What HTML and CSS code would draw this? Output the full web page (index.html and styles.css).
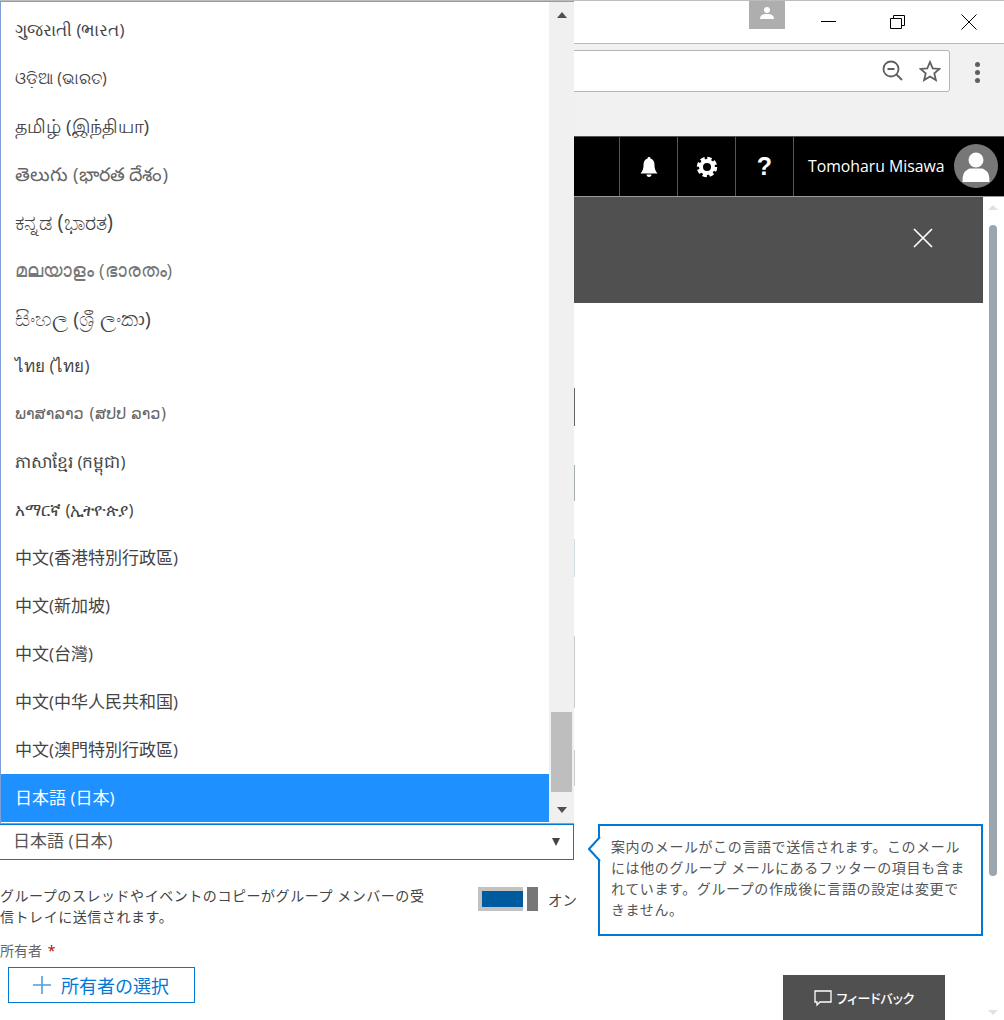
FILE: index.html
```html
<!DOCTYPE html>
<html lang="ja">
<head>
<meta charset="utf-8">
<title>グループの作成</title>
<link rel="stylesheet" href="styles.css">
</head>
<body>
<div class="page">
  <div class="titlebar">
    <div class="profile"><svg width="16" height="14" viewBox="0 0 16 14"><circle cx="8" cy="4" r="3" fill="#fff"/><path d="M1 13c0-4 3-5 7-5s7 1 7 5z" fill="#fff"/></svg></div>
    <div class="winbtns">
      <svg class="winmin" width="16" height="16" viewBox="0 0 16 16"><path d="M0 7.500h15" stroke="#000" fill="none"/></svg>
      <svg width="16" height="16" viewBox="0 0 16 16"><path d="M.5 4.500h11v10H.5zM3.500 4V1.500h11V11.500H12" stroke="#000" fill="none"/></svg>
      <svg width="16" height="16" viewBox="0 0 16 16"><path d="M.5.500l15 15M15.500.500l-15 15" stroke="#000" fill="none"/></svg>
    </div>
  </div>
  <div class="toolbar">
    <div class="omnibox">
      <svg width="22" height="22" viewBox="0 0 22 22"><circle cx="9" cy="9" r="7.500" fill="none" stroke="#5f5f5f" stroke-width="1.800"/><path d="M5.500 9h7M14.500 14.500l5.500 5.500" stroke="#5f5f5f" stroke-width="1.800" fill="none"/></svg>
      <svg width="22" height="22" viewBox="0 0 22 22"><path d="M11 2l2.700 6.300 6.800.6-5.200 4.500 1.600 6.700-5.900-3.600-5.900 3.600 1.600-6.700L1.500 8.900l6.800-.6z" fill="none" stroke="#5f5f5f" stroke-width="1.800"/></svg>
    </div>
    <div class="dots"><i></i><i></i><i></i></div>
  </div>
  <header class="appbar">
    <div class="appbtn"><svg width="18" height="20" viewBox="0 0 18 20"><path d="M9 0c1 0 1.500.7 1.500 1.500C13.500 2.300 14.500 5 14.500 8c0 4 1 6 3 8.500H.5c2-2.500 3-4.500 3-8.500 0-3 1-5.700 4-6.500C7.500.7 8 0 9 0zM6.500 17.500h5c0 1.500-1 2.500-2.500 2.500s-2.500-1-2.500-2.500z" fill="#fff"/></svg></div>
    <div class="appbtn"><svg width="22" height="22" viewBox="0 0 22 22"><circle cx="11" cy="11" r="6" fill="none" stroke="#fff" stroke-width="4"/><circle cx="11" cy="11" r="8.500" fill="none" stroke="#fff" stroke-width="3.500" stroke-dasharray="4.200 2.480"/></svg></div>
    <div class="appbtn help">?</div>
    <div class="user">
      <span class="username">Tomoharu Misawa</span>
      <div class="avatar"><svg width="44" height="44" viewBox="0 0 44 44"><circle cx="22" cy="16" r="7.500" fill="#fff"/><path d="M8.500 38c0-9 2-11 7-13.500h13c5 2.500 7 4.500 7 13.500z" fill="#fff"/></svg></div>
    </div>
  </header>
  <div class="content">
    <main class="panel">
      <div class="banner"><svg width="20" height="20" viewBox="0 0 20 20"><path d="M1 1l18 18M19 1L1 19" stroke="#fff" stroke-width="1.700" fill="none"/></svg></div>
      <div class="form">
        <div class="left">
          <div class="field f1"></div>
          <div class="field f2"></div>
          <div class="field f3"></div>
          <div class="field f4"></div>
          <div class="field f5"></div>
          <div class="select"><span>日本語 (日本)</span><i class="caret"></i></div>
          <div class="copyrow">
            <p>グループのスレッドやイベントのコピーがグループ メンバーの受信トレイに送信されます。</p>
            <div class="toggle"><div class="track"><div class="fill"></div></div><div class="knob"></div></div>
            <span class="onlabel">オン</span>
          </div>
          <div class="ownerlabel">所有者 <b>*</b></div>
          <div class="ownerbtn"><svg width="18" height="18" viewBox="0 0 18 18"><path d="M9 0v18M0 9h18" stroke="#4a9fe0" stroke-width="1.600" fill="none"/></svg><span>所有者の選択</span></div>
        </div>
        <div class="tip">
          <p>案内のメールがこの言語で送信されます。このメールには他のグループ メールにあるフッターの項目も含まれています。グループの作成後に言語の設定は変更できません。</p>
          <svg class="tiparrow" width="13" height="26" viewBox="0 0 13 26"><path d="M12 1L1 13l11 12" fill="#fff" stroke="#0078d4" stroke-width="2"/></svg>
        </div>
      </div>
    </main>
    <div class="pagescroll"><i class="up"></i><div class="pthumb"></div><i class="down"></i></div>
  </div>

  <div class="dropdown">
    <ul class="options">
      <li lang="gu">ગુજરાતી (ભારત)</li>
      <li lang="or" class="opt-or">ଓଡ଼ିଆ (ଭାରତ)</li>
      <li lang="ta" class="opt-ta">தமிழ் (இந்தியா)</li>
      <li lang="te" class="opt-te">తెలుగు (భారత దేశం)</li>
      <li lang="kn" class="opt-kn">ಕನ್ನಡ (ಭಾರತ)</li>
      <li lang="ml" class="opt-ml">മലയാളം (ഭാരതം)</li>
      <li lang="si" class="opt-si">සිංහල (ශ්‍රී ලංකා)</li>
      <li lang="th">ไทย (ไทย)</li>
      <li lang="lo" class="opt-lo">ພາສາລາວ (ສປປ ລາວ)</li>
      <li lang="km">ភាសាខ្មែរ (កម្ពុជា)</li>
      <li lang="am">አማርኛ (ኢትዮጵያ)</li>
      <li lang="zh-HK">中文(香港特別行政區)</li>
      <li lang="zh-SG">中文(新加坡)</li>
      <li lang="zh-TW">中文(台灣)</li>
      <li lang="zh-CN">中文(中华人民共和国)</li>
      <li lang="zh-MO">中文(澳門特別行政區)</li>
      <li class="selected">日本語 (日本)</li>
    </ul>
    <div class="ddscroll"><i class="up"></i><div class="ddtrack"><div class="ddthumb"></div></div><i class="down"></i></div>
  </div>

  <div class="feedback"><svg width="18" height="18" viewBox="0 0 18 18"><path d="M1 2h16v11H6l-3 3v-3H1z" fill="none" stroke="#fff" stroke-width="1.300"/></svg><span>フィードバック</span></div>
</div>
</body>
</html>
```

FILE: styles.css
```css
* { box-sizing: border-box; }
html, body { margin: 0; padding: 0; }
body { font-family: "Open Sans", "Noto Sans", "Noto Sans CJK JP", "DejaVu Sans", sans-serif; background: #fff; }
.page { position: relative; width: 1004px; height: 1020px; overflow: hidden; background: #fff; }

.titlebar { height: 44px; border-top: 1px solid #bcbcbc; border-bottom: 1px solid #b9b9b9; display: flex; justify-content: flex-end; align-items: flex-start; background: #fff; }
.profile { width: 36px; height: 28px; background: #aeaeae; display: flex; justify-content: center; padding-top: 5px; }
.winbtns { display: flex; gap: 55px; margin: 13px 27px 0 36px; }
.winmin { margin-right: -2px; }

.toolbar { height: 92px; background: #f1f1f1; display: flex; align-items: flex-start; padding-top: 6px; }
.omnibox { width: 950px; height: 42px; background: #fff; border: 1px solid #b4b4b4; border-radius: 3px; display: flex; justify-content: flex-end; align-items: center; gap: 15px; padding-right: 8px; }
.dots { display: flex; flex-direction: column; gap: 3px; margin: 12px 0 0 25px; }
.dots i { width: 5px; height: 5px; border-radius: 50%; background: #5f5f5f; }

.appbar { height: 61px; background: #000; border-top: 1px solid #555; border-bottom: 1px solid #999; display: flex; justify-content: flex-end; align-items: stretch; }
.appbtn { width: 58px; border-left: 1px solid #555; display: flex; align-items: center; justify-content: center; color: #fff; }
.help { font: bold 25px "Liberation Sans", sans-serif; }
.user { width: 211px; border-left: 1px solid #555; display: flex; align-items: center; justify-content: space-between; padding: 0 6px 2px 14px; color: #fff; font-size: 15.800px; }
.avatar { width: 44px; height: 44px; border-radius: 50%; background: #777; overflow: hidden; }
.avatar svg { display: block; }

.content { display: flex; height: 823px; }
.panel { width: 983px; }
.banner { height: 106px; background: #505050; display: flex; justify-content: flex-end; padding: 31px 50px 0 0; }
.banner svg { display: block; }

.form { display: flex; gap: 23px; align-items: flex-start; }
.left { width: 575px; flex: none; }
.field { border: 1px solid #ccc; }
.f1 { height: 38px; margin-top: 85px; border-color: #666; }
.f2 { height: 36px; margin-top: 39px; border-color: #a8b0ae; }
.f3 { height: 38px; margin-top: 38px; border-color: #d4dde2; }
.f4 { height: 72px; margin-top: 59px; }
.f5 { height: 36px; margin-top: 42px; }

.select { margin: 38px 1px 0 -1px; height: 36px; border: 1px solid #0078d4; display: flex; align-items: center; justify-content: space-between; padding: 0 10px 5px 13px; font-size: 17px; color: #555; }
.caret { width: 0; height: 0; border: 4px solid transparent; border-top: 8px solid #444; border-bottom: 0; margin: 5px 3px 0 0; }

.copyrow { display: flex; align-items: flex-start; margin-top: 25px; width: 590px; }
.copyrow p { width: 430px; margin: 0; font-size: 14px; line-height: 21px; color: #444; letter-spacing: .55px; }
.toggle { display: flex; gap: 4px; margin: 2px 0 0 48px; height: 24px; }
.track { width: 45px; height: 24px; background: #c2c2c2; padding: 4px 0 4px 4px; }
.fill { width: 41px; height: 16px; background: #005a9e; }
.knob { width: 11px; height: 24px; background: #777; }
.onlabel { margin: 4px 0 0 10px; font-size: 14.500px; color: #444; white-space: nowrap; }

.ownerlabel { margin-top: 15px; font-size: 14px; line-height: 18px; color: #666; }
.ownerlabel b { color: #b00; font-weight: normal; margin-left: 2px; }
.ownerbtn { margin: 7px 0 0 8px; width: 187px; height: 36px; border: 1px solid #0078d4; display: flex; align-items: center; gap: 10px; padding-left: 24px; color: #0078d4; font-size: 18px; }

.tip { position: relative; flex: none; width: 385px; height: 112px; margin-top: 521px; border: 2px solid #0078d4; padding: 10px 11px 0; background: #fff; }
.tip p { margin: 0; font-size: 14px; line-height: 21px; color: #555; letter-spacing: .6px; }
.tiparrow { position: absolute; left: -12px; top: 10px; }

.pagescroll { flex: none; width: 21px; position: relative; }
.pagescroll .up, .pagescroll .down { position: absolute; left: 5px; width: 0; height: 0; border: 5px solid transparent; }
.pagescroll .up { top: 8px; border-top: 0; border-bottom: 5px solid #dfe3e6; }
.pthumb { position: absolute; left: 6px; top: 28px; width: 8px; height: 651px; border-radius: 4px; background: #9aa5ad; }
.pagescroll .down { top: 813px; border-bottom: 0; border-top: 5px solid #dfe3e6; }

.dropdown { position: absolute; left: 0; top: 1px; width: 574px; height: 823px; background: #fff; border: 1px solid #7b9fd6; border-right: 0; display: flex; }
.options { list-style: none; margin: 0; padding: 4px 0 0; width: 548px; flex: none; }
.options li { height: 48px; padding-left: 14px; line-height: 48px; font-size: 17px; color: #444; white-space: nowrap; overflow: hidden; }
.options .selected { background: #1e90ff; color: #fff; }
.options .opt-or { font-size: 16px; }
.options .opt-ta { font-size: 19px; }
.options .opt-te { font-size: 19px; color: #666; }
.options .opt-kn { font-size: 21px; }
.options .opt-ml { font-size: 19px; color: #777; }
.options .opt-si { font-size: 20.500px; }
.options .opt-lo { font-size: 16px; color: #666; font-family: "DejaVu Sans", sans-serif; }
.ddscroll { flex: 1; background: #f0f0f0; display: flex; flex-direction: column; align-items: center; justify-content: space-between; padding: 10px 0; position: relative; }
.ddscroll .up { width: 0; height: 0; border: 5px solid transparent; border-top: 0; border-bottom: 6px solid #505050; }
.ddscroll .down { width: 0; height: 0; border: 5px solid transparent; border-bottom: 0; border-top: 6px solid #505050; }
.ddtrack { flex: 1; width: 100%; display: flex; flex-direction: column; justify-content: flex-end; }
.ddthumb { width: 21px; height: 80px; margin: 0 auto 15px; background: #bebebe; }

.feedback { position: absolute; left: 783px; top: 975px; width: 162px; height: 45px; background: #505050; color: #fff; display: flex; align-items: center; justify-content: center; gap: 3px; font-size: 13px; font-weight: 500; letter-spacing: -1.800px; }
```
